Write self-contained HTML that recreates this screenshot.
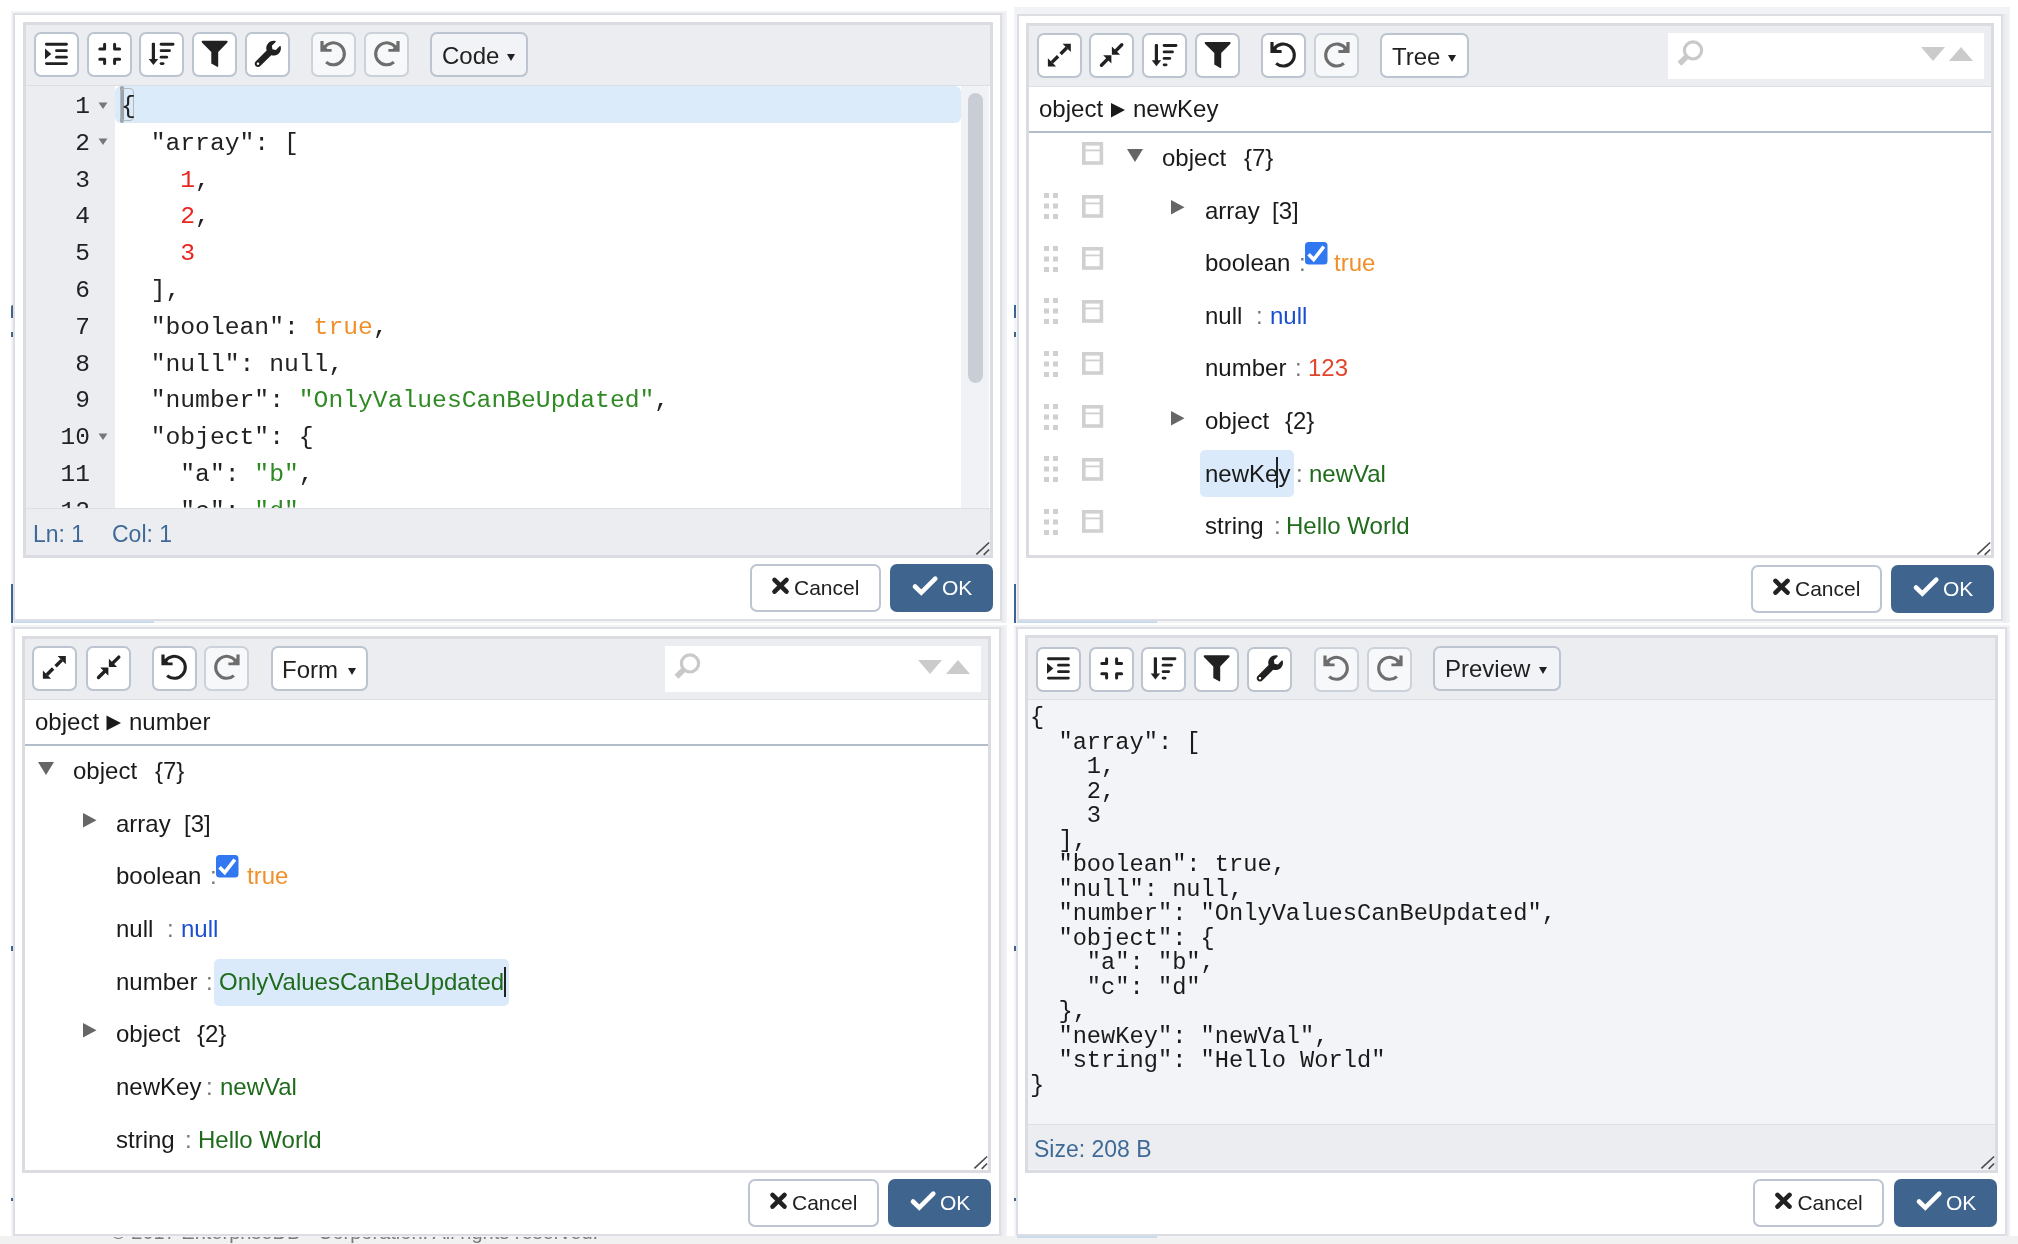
<!DOCTYPE html><html><head><meta charset="utf-8"><title>JSON editors</title><style>html,body{margin:0;padding:0;}body{will-change:transform;width:2018px;height:1244px;position:relative;overflow:hidden;background:#fff;font-family:"Liberation Sans",sans-serif;}</style></head><body>
<div style="position:absolute;left:0px;top:1236px;width:2018px;height:8px;background:#f1f1f2"></div>
<div style="position:absolute;left:111px;top:1217px;font-family:'Liberation Sans', sans-serif;font-size:20px;line-height:30px;color:#7b7b7b;white-space:pre;">© 2017 EnterpriseDB</div>
<div style="position:absolute;left:318px;top:1217px;font-family:'Liberation Sans', sans-serif;font-size:20px;line-height:30px;color:#7b7b7b;white-space:pre;">Corporation. All rights reserved.</div>
<div style="position:absolute;left:11px;top:11px;width:996px;height:612px;background:#f2f3f6"></div>
<div style="position:absolute;left:1002px;top:13px;width:5px;height:610px;background:linear-gradient(to right,#e7e9ed,#f3f4f6)"></div>
<div style="position:absolute;left:13px;top:13px;width:989px;height:608px;box-sizing:border-box;background:#fff;border:2px solid #dcdee3"></div>
<div style="position:absolute;left:11px;top:584px;width:2px;height:39px;background:#3d6590"></div>
<div style="position:absolute;left:14px;top:621px;width:140px;height:2px;background:#c9dcec"></div>
<div style="position:absolute;left:11px;top:305px;width:2px;height:13px;background:#3d6590;border-top-left-radius:2px"></div>
<div style="position:absolute;left:11px;top:332px;width:2px;height:5px;background:#3d6590"></div>
<div style="position:absolute;left:23px;top:22px;width:970px;height:536px;box-sizing:border-box;background:#fff;border:3px solid #dadce2"></div>
<div style="position:absolute;left:26px;top:25px;width:964px;height:61px;background:#ebedf1;border-bottom:1px solid #dcdee3;box-sizing:border-box"></div>
<div style="position:absolute;left:34px;top:32px;width:45px;height:45px;box-sizing:border-box;background:#ffffff;border:2px solid #bcc4d0;border-radius:7px"></div>
<svg style="position:absolute;left:34px;top:32px" width="45" height="45" viewBox="0 0 45 45"><g transform="translate(0,0.5)"><g fill="#212121"><rect x="11" y="10.3" width="22.8" height="2.9" rx="1.4"/><rect x="21.1" y="16.8" width="12.7" height="2.8" rx="1.4"/><rect x="21.1" y="23.3" width="12.7" height="2.8" rx="1.4"/><rect x="11" y="29.7" width="22.8" height="2.8" rx="1.4"/><polygon points="11,16.1 17.3,21.4 11,26.7"/></g></g></svg>
<div style="position:absolute;left:86.7px;top:32px;width:45px;height:45px;box-sizing:border-box;background:#ffffff;border:2px solid #bcc4d0;border-radius:7px"></div>
<svg style="position:absolute;left:86.7px;top:32px" width="45" height="45" viewBox="0 0 45 45"><g transform="translate(0,0.5)"><g fill="none" stroke="#212121" stroke-width="3" stroke-linecap="round" stroke-linejoin="round"><polyline points="12.8,16.6 17.6,16.6 17.6,11.8"/><polyline points="32.6,16.6 27.6,16.6 27.6,11.8"/><polyline points="12.8,26.7 17.6,26.7 17.6,31"/><polyline points="32.6,26.7 27.6,26.7 27.6,31"/></g></g></svg>
<div style="position:absolute;left:139.3px;top:32px;width:45px;height:45px;box-sizing:border-box;background:#ffffff;border:2px solid #bcc4d0;border-radius:7px"></div>
<svg style="position:absolute;left:139.3px;top:32px" width="45" height="45" viewBox="0 0 45 45"><g transform="translate(0,0.5)"><g fill="#212121"><rect x="12.8" y="10.3" width="3.2" height="17.5" rx="1"/><polygon points="9.7,26.6 19.2,26.6 14.4,32.6"/><rect x="20.7" y="10.3" width="14.7" height="2.9" rx="1.4"/><rect x="20.7" y="16.8" width="11.2" height="2.8" rx="1.4"/><rect x="20.7" y="23.3" width="8.4" height="2.8" rx="1.4"/><rect x="20.7" y="29.7" width="4.8" height="2.8" rx="1.4"/></g></g></svg>
<div style="position:absolute;left:191.9px;top:32px;width:45px;height:45px;box-sizing:border-box;background:#ffffff;border:2px solid #bcc4d0;border-radius:7px"></div>
<svg style="position:absolute;left:191.9px;top:32px" width="45" height="45" viewBox="0 0 45 45"><g transform="translate(0,0.5)"><path fill="#212121" d="M10.6,8.3 L34.7,8.3 Q36.3,8.5 35.4,10 L26.2,19.4 L26.2,33.6 Q26.2,34.8 25.2,34.2 L19.3,30.9 L19.3,19.4 L9.9,10 Q9.1,8.5 10.6,8.3 Z"/></g></svg>
<div style="position:absolute;left:244.5px;top:32px;width:45px;height:45px;box-sizing:border-box;background:#ffffff;border:2px solid #bcc4d0;border-radius:7px"></div>
<svg style="position:absolute;left:244.5px;top:32px" width="45" height="45" viewBox="0 0 45 45"><g transform="translate(0,0.5)"><g transform="translate(9.7,8.3) scale(0.0513)"><path fill="#212121" d="M507.73 109.1c-2.24-9.03-13.54-12.09-20.12-5.51l-74.36 74.36-67.88-11.31-11.31-67.88 74.36-74.36c6.62-6.62 3.43-17.9-5.66-20.16-47.38-11.74-99.55.91-136.58 37.93-39.64 39.64-50.55 97.1-34.05 147.2L18.74 402.76c-24.99 24.99-24.99 65.51 0 90.5 24.99 24.99 65.51 24.99 90.5 0l213.21-213.21c50.12 16.71 107.47 5.68 147.37-34.22 37.07-37.07 49.7-89.32 37.91-136.73zM64 472c-13.25 0-24-10.75-24-24 0-13.26 10.75-24 24-24s24 10.74 24 24c0 13.25-10.75 24-24 24z"/></g></g></svg>
<div style="position:absolute;left:311px;top:32px;width:45px;height:45px;box-sizing:border-box;background:#f7f8fa;border:2px solid #ccd2da;border-radius:7px"></div>
<svg style="position:absolute;left:311px;top:32px" width="45" height="45" viewBox="0 0 45 45"><g transform="translate(0,0.5)"><g><path d="M13.3,15 A11,11 0 1 1 15.1,29.6" fill="none" stroke="#6d6d6d" stroke-width="3.1"/><polygon fill="#6d6d6d" points="9.4,8.4 12.6,8.4 12.6,12.8 16.4,16.4 20.6,16.4 20.6,19.2 9.4,19.2"/></g></g></svg>
<div style="position:absolute;left:364px;top:32px;width:45px;height:45px;box-sizing:border-box;background:#f7f8fa;border:2px solid #ccd2da;border-radius:7px"></div>
<svg style="position:absolute;left:364px;top:32px" width="45" height="45" viewBox="0 0 45 45"><g transform="translate(0,0.5)"><g transform="translate(45,0) scale(-1,1)"><g><path d="M13.3,15 A11,11 0 1 1 15.1,29.6" fill="none" stroke="#6d6d6d" stroke-width="3.1"/><polygon fill="#6d6d6d" points="9.4,8.4 12.6,8.4 12.6,12.8 16.4,16.4 20.6,16.4 20.6,19.2 9.4,19.2"/></g></g></g></svg>
<div style="position:absolute;left:430px;top:32px;width:98px;height:45px;box-sizing:border-box;background:#f2f3f6;border:2px solid #bcc4d0;border-radius:7px"></div>
<div style="position:absolute;left:442px;top:41px;font-family:'Liberation Sans', sans-serif;font-size:24px;line-height:30px;color:#212121;white-space:pre;">Code</div>
<svg style="position:absolute;left:507px;top:54px" width="8" height="8" viewBox="0 0 8 8"><polygon points="0,0 8,0 4,7" fill="#212121"/></svg>
<div style="position:absolute;left:26px;top:86px;width:89px;height:422px;background:#ebedf1"></div>
<div style="position:absolute;left:961px;top:86px;width:28px;height:422px;background:#f1f2f5"></div>
<div style="position:absolute;left:968px;top:93px;width:15px;height:290px;background:#c9ced6;border-radius:7.5px"></div>
<div style="position:absolute;left:115px;top:86px;width:846px;height:37px;background:#dbebf9;border-radius:6px"></div>
<div style="position:absolute;left:120px;top:86px;width:4px;height:37px;background:#9aa3ad;border-radius:2px"></div>
<div style="position:absolute;left:120px;top:88px;width:14px;height:33px;box-sizing:border-box;border:1px solid #b8b8b8;border-radius:4px"></div>
<div style="position:absolute;left:26px;top:86px;width:935px;height:422px;overflow:hidden">
<div style="position:absolute;left:0px;top:2.0px;width:64px;text-align:right;font-family:'Liberation Mono', monospace;font-size:24.5px;line-height:37px;color:#222">1</div>
<svg style="position:absolute;left:72px;top:15.5px" width="10" height="8"><polygon points="0.5,0.5 9.5,0.5 5,7" fill="#777"/></svg>
<div style="position:absolute;left:95px;top:2.0px;font-family:'Liberation Mono', monospace;font-size:24.7px;line-height:37px;color:#222;white-space:pre">{</div>
<div style="position:absolute;left:0px;top:38.8px;width:64px;text-align:right;font-family:'Liberation Mono', monospace;font-size:24.5px;line-height:37px;color:#222">2</div>
<svg style="position:absolute;left:72px;top:52.3px" width="10" height="8"><polygon points="0.5,0.5 9.5,0.5 5,7" fill="#777"/></svg>
<div style="position:absolute;left:95px;top:38.8px;font-family:'Liberation Mono', monospace;font-size:24.7px;line-height:37px;color:#222;white-space:pre">  "array": [</div>
<div style="position:absolute;left:0px;top:75.6px;width:64px;text-align:right;font-family:'Liberation Mono', monospace;font-size:24.5px;line-height:37px;color:#222">3</div>
<div style="position:absolute;left:95px;top:75.6px;font-family:'Liberation Mono', monospace;font-size:24.7px;line-height:37px;color:#222;white-space:pre">    <span style="color:#e8261e">1</span>,</div>
<div style="position:absolute;left:0px;top:112.4px;width:64px;text-align:right;font-family:'Liberation Mono', monospace;font-size:24.5px;line-height:37px;color:#222">4</div>
<div style="position:absolute;left:95px;top:112.4px;font-family:'Liberation Mono', monospace;font-size:24.7px;line-height:37px;color:#222;white-space:pre">    <span style="color:#e8261e">2</span>,</div>
<div style="position:absolute;left:0px;top:149.2px;width:64px;text-align:right;font-family:'Liberation Mono', monospace;font-size:24.5px;line-height:37px;color:#222">5</div>
<div style="position:absolute;left:95px;top:149.2px;font-family:'Liberation Mono', monospace;font-size:24.7px;line-height:37px;color:#222;white-space:pre">    <span style="color:#e8261e">3</span></div>
<div style="position:absolute;left:0px;top:186.0px;width:64px;text-align:right;font-family:'Liberation Mono', monospace;font-size:24.5px;line-height:37px;color:#222">6</div>
<div style="position:absolute;left:95px;top:186.0px;font-family:'Liberation Mono', monospace;font-size:24.7px;line-height:37px;color:#222;white-space:pre">  ],</div>
<div style="position:absolute;left:0px;top:222.8px;width:64px;text-align:right;font-family:'Liberation Mono', monospace;font-size:24.5px;line-height:37px;color:#222">7</div>
<div style="position:absolute;left:95px;top:222.8px;font-family:'Liberation Mono', monospace;font-size:24.7px;line-height:37px;color:#222;white-space:pre">  "boolean": <span style="color:#f0902a">true</span>,</div>
<div style="position:absolute;left:0px;top:259.6px;width:64px;text-align:right;font-family:'Liberation Mono', monospace;font-size:24.5px;line-height:37px;color:#222">8</div>
<div style="position:absolute;left:95px;top:259.6px;font-family:'Liberation Mono', monospace;font-size:24.7px;line-height:37px;color:#222;white-space:pre">  "null": null,</div>
<div style="position:absolute;left:0px;top:296.4px;width:64px;text-align:right;font-family:'Liberation Mono', monospace;font-size:24.5px;line-height:37px;color:#222">9</div>
<div style="position:absolute;left:95px;top:296.4px;font-family:'Liberation Mono', monospace;font-size:24.7px;line-height:37px;color:#222;white-space:pre">  "number": <span style="color:#2f8a24">"OnlyValuesCanBeUpdated"</span>,</div>
<div style="position:absolute;left:0px;top:333.2px;width:64px;text-align:right;font-family:'Liberation Mono', monospace;font-size:24.5px;line-height:37px;color:#222">10</div>
<svg style="position:absolute;left:72px;top:346.7px" width="10" height="8"><polygon points="0.5,0.5 9.5,0.5 5,7" fill="#777"/></svg>
<div style="position:absolute;left:95px;top:333.2px;font-family:'Liberation Mono', monospace;font-size:24.7px;line-height:37px;color:#222;white-space:pre">  "object": {</div>
<div style="position:absolute;left:0px;top:370.0px;width:64px;text-align:right;font-family:'Liberation Mono', monospace;font-size:24.5px;line-height:37px;color:#222">11</div>
<div style="position:absolute;left:95px;top:370.0px;font-family:'Liberation Mono', monospace;font-size:24.7px;line-height:37px;color:#222;white-space:pre">    "a": <span style="color:#2f8a24">"b"</span>,</div>
<div style="position:absolute;left:0px;top:406.8px;width:64px;text-align:right;font-family:'Liberation Mono', monospace;font-size:24.5px;line-height:37px;color:#222">12</div>
<div style="position:absolute;left:95px;top:406.8px;font-family:'Liberation Mono', monospace;font-size:24.7px;line-height:37px;color:#222;white-space:pre">    "c": <span style="color:#2f8a24">"d"</span></div>
</div>
<div style="position:absolute;left:26px;top:508px;width:964px;height:47px;background:#ebedf1;border-top:1px solid #dcdee3;box-sizing:border-box"></div>
<div style="position:absolute;left:33px;top:519px;font-family:'Liberation Sans', sans-serif;font-size:23px;line-height:30px;color:#3f6a97;white-space:pre;">Ln: 1</div>
<div style="position:absolute;left:112px;top:519px;font-family:'Liberation Sans', sans-serif;font-size:23px;line-height:30px;color:#3f6a97;white-space:pre;">Col: 1</div>
<svg style="position:absolute;left:974px;top:540px" width="16" height="16" viewBox="0 0 16 16"><g stroke="#4a4a4a" stroke-width="1.6"><line x1="2.4" y1="14.4" x2="15.1" y2="2.5"/><line x1="9.7" y1="14.9" x2="15.1" y2="9.5"/></g></svg>
<div style="position:absolute;left:750px;top:564px;width:131px;height:48px;box-sizing:border-box;background:#fff;border:2px solid #bcc5d1;border-radius:7px"></div>
<svg style="position:absolute;left:750px;top:564px" width="60" height="48" viewBox="0 0 60 48"><g stroke="#212121" stroke-width="4.6" stroke-linecap="round"><line x1="24.5" y1="15.9" x2="36.5" y2="27.6"/><line x1="36.5" y1="15.9" x2="24.5" y2="27.6"/></g></svg>
<div style="position:absolute;left:794px;top:573px;font-family:'Liberation Sans', sans-serif;font-size:21px;line-height:30px;color:#212121;white-space:pre;">Cancel</div>
<div style="position:absolute;left:890px;top:564px;width:103px;height:48px;background:#3f658f;border-radius:7px"></div>
<svg style="position:absolute;left:890px;top:564px" width="60" height="48" viewBox="0 0 60 48"><polyline points="25,22.5 31.3,28.6 45.3,14.6" fill="none" stroke="#fff" stroke-width="4.6" stroke-linecap="round" stroke-linejoin="miter"/></svg>
<div style="position:absolute;left:942px;top:573px;font-family:'Liberation Sans', sans-serif;font-size:21px;line-height:30px;color:#ffffff;white-space:pre;">OK</div>
<div style="position:absolute;left:1014px;top:7px;width:996px;height:616px;background:#f2f3f6"></div>
<div style="position:absolute;left:2002.5px;top:14px;width:7.5px;height:609px;background:linear-gradient(to right,#e7e9ed,#f3f4f6)"></div>
<div style="position:absolute;left:1016.5px;top:14px;width:986.0px;height:607px;box-sizing:border-box;background:#fff;border:2px solid #dcdee3"></div>
<div style="position:absolute;left:1014px;top:584px;width:2px;height:39px;background:#3d6590"></div>
<div style="position:absolute;left:1017px;top:621px;width:140px;height:2px;background:#c9dcec"></div>
<div style="position:absolute;left:1014px;top:305px;width:2px;height:13px;background:#3d6590"></div>
<div style="position:absolute;left:1014px;top:332px;width:2px;height:5px;background:#3d6590"></div>
<div style="position:absolute;left:1026px;top:23px;width:968px;height:535px;box-sizing:border-box;background:#fff;border:3px solid #dadce2"></div>
<div style="position:absolute;left:1029px;top:26px;width:962px;height:61px;background:#ebedf1;border-bottom:1px solid #dcdee3;box-sizing:border-box"></div>
<div style="position:absolute;left:1037.1px;top:33px;width:45px;height:45px;box-sizing:border-box;background:#ffffff;border:2px solid #bcc4d0;border-radius:7px"></div>
<svg style="position:absolute;left:1037.1px;top:33px" width="45" height="45" viewBox="0 0 45 45"><g transform="translate(0,0.7)"><g fill="#212121"><polygon points="33.8,10.1 25.6,10.1 33.8,18.3"/><polygon points="10.9,32.7 19.1,32.7 10.9,24.5"/></g><g stroke="#212121" stroke-width="3.4" stroke-linecap="butt"><line x1="29.8" y1="14.1" x2="23.6" y2="20.3"/><line x1="14.9" y1="28.7" x2="21.1" y2="22.5"/></g></g></svg>
<div style="position:absolute;left:1089.4px;top:33px;width:45px;height:45px;box-sizing:border-box;background:#ffffff;border:2px solid #bcc4d0;border-radius:7px"></div>
<svg style="position:absolute;left:1089.4px;top:33px" width="45" height="45" viewBox="0 0 45 45"><g transform="translate(0,0.7)"><g fill="#212121"><polygon points="22.9,21 22.9,12.8 31.1,21"/><polygon points="22.4,21.6 22.4,29.8 14.2,21.6"/></g><g stroke="#212121" stroke-width="3.4" stroke-linecap="round"><line x1="26.5" y1="17.4" x2="32.8" y2="11.1"/><line x1="18.8" y1="25.2" x2="12.5" y2="31.5"/></g></g></svg>
<div style="position:absolute;left:1142px;top:33px;width:45px;height:45px;box-sizing:border-box;background:#ffffff;border:2px solid #bcc4d0;border-radius:7px"></div>
<svg style="position:absolute;left:1142px;top:33px" width="45" height="45" viewBox="0 0 45 45"><g transform="translate(0,0.7)"><g fill="#212121"><rect x="12.8" y="10.3" width="3.2" height="17.5" rx="1"/><polygon points="9.7,26.6 19.2,26.6 14.4,32.6"/><rect x="20.7" y="10.3" width="14.7" height="2.9" rx="1.4"/><rect x="20.7" y="16.8" width="11.2" height="2.8" rx="1.4"/><rect x="20.7" y="23.3" width="8.4" height="2.8" rx="1.4"/><rect x="20.7" y="29.7" width="4.8" height="2.8" rx="1.4"/></g></g></svg>
<div style="position:absolute;left:1194.6px;top:33px;width:45px;height:45px;box-sizing:border-box;background:#ffffff;border:2px solid #bcc4d0;border-radius:7px"></div>
<svg style="position:absolute;left:1194.6px;top:33px" width="45" height="45" viewBox="0 0 45 45"><g transform="translate(0,0.7)"><path fill="#212121" d="M10.6,8.3 L34.7,8.3 Q36.3,8.5 35.4,10 L26.2,19.4 L26.2,33.6 Q26.2,34.8 25.2,34.2 L19.3,30.9 L19.3,19.4 L9.9,10 Q9.1,8.5 10.6,8.3 Z"/></g></svg>
<div style="position:absolute;left:1261.2px;top:33px;width:45px;height:45px;box-sizing:border-box;background:#ffffff;border:2px solid #bcc4d0;border-radius:7px"></div>
<svg style="position:absolute;left:1261.2px;top:33px" width="45" height="45" viewBox="0 0 45 45"><g transform="translate(0,0.7)"><g><path d="M13.3,15 A11,11 0 1 1 15.1,29.6" fill="none" stroke="#212121" stroke-width="3.1"/><polygon fill="#212121" points="9.4,8.4 12.6,8.4 12.6,12.8 16.4,16.4 20.6,16.4 20.6,19.2 9.4,19.2"/></g></g></svg>
<div style="position:absolute;left:1313.8px;top:33px;width:45px;height:45px;box-sizing:border-box;background:#f7f8fa;border:2px solid #ccd2da;border-radius:7px"></div>
<svg style="position:absolute;left:1313.8px;top:33px" width="45" height="45" viewBox="0 0 45 45"><g transform="translate(0,0.7)"><g transform="translate(45,0) scale(-1,1)"><g><path d="M13.3,15 A11,11 0 1 1 15.1,29.6" fill="none" stroke="#6d6d6d" stroke-width="3.1"/><polygon fill="#6d6d6d" points="9.4,8.4 12.6,8.4 12.6,12.8 16.4,16.4 20.6,16.4 20.6,19.2 9.4,19.2"/></g></g></g></svg>
<div style="position:absolute;left:1380px;top:33px;width:89px;height:45px;box-sizing:border-box;background:#ffffff;border:2px solid #bcc4d0;border-radius:7px"></div>
<div style="position:absolute;left:1392px;top:42px;font-family:'Liberation Sans', sans-serif;font-size:24px;line-height:30px;color:#212121;white-space:pre;">Tree</div>
<svg style="position:absolute;left:1448px;top:55px" width="8" height="8" viewBox="0 0 8 8"><polygon points="0,0 8,0 4,7" fill="#212121"/></svg>
<div style="position:absolute;left:1668px;top:33px;width:316px;height:46px;background:#fff"></div>
<svg style="position:absolute;left:1668px;top:33px" width="316" height="46" viewBox="0 0 316 46"><g fill="none" stroke="#c9c9c9"><circle cx="25" cy="17.4" r="8.6" stroke-width="3.2"/><line x1="18.5" y1="23.8" x2="11.5" y2="30.8" stroke-width="5.5"/></g><polygon fill="#cbcbcb" points="253,14 277,14 265,28"/><polygon fill="#cbcbcb" points="281,28 305,28 293,14"/></svg>
<div style="position:absolute;left:1029px;top:87px;width:962px;height:46px;background:#fff;border-bottom:2px solid #b3bcc9;box-sizing:border-box"></div>
<div style="position:absolute;left:1039px;top:94px;font-family:'Liberation Sans', sans-serif;font-size:24px;line-height:30px;color:#1a1a1a;white-space:pre;">object</div>
<svg style="position:absolute;left:1110px;top:102px" width="16" height="17" viewBox="0 0 16 17"><polygon points="1,1 15,8 1,15.5" fill="#1a1a1a"/></svg>
<div style="position:absolute;left:1133px;top:94px;font-family:'Liberation Sans', sans-serif;font-size:24px;line-height:30px;color:#1a1a1a;white-space:pre;">newKey</div>
<svg style="position:absolute;left:1082px;top:142px" width="22" height="23" viewBox="0 0 22 23"><rect x="1.8" y="1.8" width="17.6" height="19.2" fill="none" stroke="#d0d0d0" stroke-width="3.6"/><rect x="3" y="7.5" width="16" height="1.8" fill="#d0d0d0"/></svg>
<svg style="position:absolute;left:1127px;top:148.5px" width="16" height="14" viewBox="0 0 16 14"><polygon points="0,0 16,0 8,13" fill="#666"/></svg>
<div style="position:absolute;left:1162px;top:143px;font-family:'Liberation Sans', sans-serif;font-size:24px;line-height:30px;color:#1a1a1a;white-space:pre;">object</div>
<div style="position:absolute;left:1244px;top:143px;font-family:'Liberation Sans', sans-serif;font-size:24px;line-height:30px;color:#1a1a1a;white-space:pre;">{7}</div>
<svg style="position:absolute;left:1044px;top:193.1px" width="15" height="27" viewBox="0 0 15 27"><rect x="0" y="0.0" width="5" height="5" fill="#d0d0d0"/><rect x="9" y="0.0" width="5" height="5" fill="#d0d0d0"/><rect x="0" y="10.5" width="5" height="5" fill="#d0d0d0"/><rect x="9" y="10.5" width="5" height="5" fill="#d0d0d0"/><rect x="0" y="21.0" width="5" height="5" fill="#d0d0d0"/><rect x="9" y="21.0" width="5" height="5" fill="#d0d0d0"/></svg>
<svg style="position:absolute;left:1082px;top:194.6px" width="22" height="23" viewBox="0 0 22 23"><rect x="1.8" y="1.8" width="17.6" height="19.2" fill="none" stroke="#d0d0d0" stroke-width="3.6"/><rect x="3" y="7.5" width="16" height="1.8" fill="#d0d0d0"/></svg>
<svg style="position:absolute;left:1044px;top:245.7px" width="15" height="27" viewBox="0 0 15 27"><rect x="0" y="0.0" width="5" height="5" fill="#d0d0d0"/><rect x="9" y="0.0" width="5" height="5" fill="#d0d0d0"/><rect x="0" y="10.5" width="5" height="5" fill="#d0d0d0"/><rect x="9" y="10.5" width="5" height="5" fill="#d0d0d0"/><rect x="0" y="21.0" width="5" height="5" fill="#d0d0d0"/><rect x="9" y="21.0" width="5" height="5" fill="#d0d0d0"/></svg>
<svg style="position:absolute;left:1082px;top:247.2px" width="22" height="23" viewBox="0 0 22 23"><rect x="1.8" y="1.8" width="17.6" height="19.2" fill="none" stroke="#d0d0d0" stroke-width="3.6"/><rect x="3" y="7.5" width="16" height="1.8" fill="#d0d0d0"/></svg>
<svg style="position:absolute;left:1044px;top:298.3px" width="15" height="27" viewBox="0 0 15 27"><rect x="0" y="0.0" width="5" height="5" fill="#d0d0d0"/><rect x="9" y="0.0" width="5" height="5" fill="#d0d0d0"/><rect x="0" y="10.5" width="5" height="5" fill="#d0d0d0"/><rect x="9" y="10.5" width="5" height="5" fill="#d0d0d0"/><rect x="0" y="21.0" width="5" height="5" fill="#d0d0d0"/><rect x="9" y="21.0" width="5" height="5" fill="#d0d0d0"/></svg>
<svg style="position:absolute;left:1082px;top:299.8px" width="22" height="23" viewBox="0 0 22 23"><rect x="1.8" y="1.8" width="17.6" height="19.2" fill="none" stroke="#d0d0d0" stroke-width="3.6"/><rect x="3" y="7.5" width="16" height="1.8" fill="#d0d0d0"/></svg>
<svg style="position:absolute;left:1044px;top:350.9px" width="15" height="27" viewBox="0 0 15 27"><rect x="0" y="0.0" width="5" height="5" fill="#d0d0d0"/><rect x="9" y="0.0" width="5" height="5" fill="#d0d0d0"/><rect x="0" y="10.5" width="5" height="5" fill="#d0d0d0"/><rect x="9" y="10.5" width="5" height="5" fill="#d0d0d0"/><rect x="0" y="21.0" width="5" height="5" fill="#d0d0d0"/><rect x="9" y="21.0" width="5" height="5" fill="#d0d0d0"/></svg>
<svg style="position:absolute;left:1082px;top:352.4px" width="22" height="23" viewBox="0 0 22 23"><rect x="1.8" y="1.8" width="17.6" height="19.2" fill="none" stroke="#d0d0d0" stroke-width="3.6"/><rect x="3" y="7.5" width="16" height="1.8" fill="#d0d0d0"/></svg>
<svg style="position:absolute;left:1044px;top:403.5px" width="15" height="27" viewBox="0 0 15 27"><rect x="0" y="0.0" width="5" height="5" fill="#d0d0d0"/><rect x="9" y="0.0" width="5" height="5" fill="#d0d0d0"/><rect x="0" y="10.5" width="5" height="5" fill="#d0d0d0"/><rect x="9" y="10.5" width="5" height="5" fill="#d0d0d0"/><rect x="0" y="21.0" width="5" height="5" fill="#d0d0d0"/><rect x="9" y="21.0" width="5" height="5" fill="#d0d0d0"/></svg>
<svg style="position:absolute;left:1082px;top:405px" width="22" height="23" viewBox="0 0 22 23"><rect x="1.8" y="1.8" width="17.6" height="19.2" fill="none" stroke="#d0d0d0" stroke-width="3.6"/><rect x="3" y="7.5" width="16" height="1.8" fill="#d0d0d0"/></svg>
<svg style="position:absolute;left:1044px;top:456.1px" width="15" height="27" viewBox="0 0 15 27"><rect x="0" y="0.0" width="5" height="5" fill="#d0d0d0"/><rect x="9" y="0.0" width="5" height="5" fill="#d0d0d0"/><rect x="0" y="10.5" width="5" height="5" fill="#d0d0d0"/><rect x="9" y="10.5" width="5" height="5" fill="#d0d0d0"/><rect x="0" y="21.0" width="5" height="5" fill="#d0d0d0"/><rect x="9" y="21.0" width="5" height="5" fill="#d0d0d0"/></svg>
<svg style="position:absolute;left:1082px;top:457.6px" width="22" height="23" viewBox="0 0 22 23"><rect x="1.8" y="1.8" width="17.6" height="19.2" fill="none" stroke="#d0d0d0" stroke-width="3.6"/><rect x="3" y="7.5" width="16" height="1.8" fill="#d0d0d0"/></svg>
<svg style="position:absolute;left:1044px;top:508.70000000000005px" width="15" height="27" viewBox="0 0 15 27"><rect x="0" y="0.0" width="5" height="5" fill="#d0d0d0"/><rect x="9" y="0.0" width="5" height="5" fill="#d0d0d0"/><rect x="0" y="10.5" width="5" height="5" fill="#d0d0d0"/><rect x="9" y="10.5" width="5" height="5" fill="#d0d0d0"/><rect x="0" y="21.0" width="5" height="5" fill="#d0d0d0"/><rect x="9" y="21.0" width="5" height="5" fill="#d0d0d0"/></svg>
<svg style="position:absolute;left:1082px;top:510.20000000000005px" width="22" height="23" viewBox="0 0 22 23"><rect x="1.8" y="1.8" width="17.6" height="19.2" fill="none" stroke="#d0d0d0" stroke-width="3.6"/><rect x="3" y="7.5" width="16" height="1.8" fill="#d0d0d0"/></svg>
<svg style="position:absolute;left:1171.3px;top:200px" width="14" height="16" viewBox="0 0 14 16"><polygon points="0,0 13.5,7.3 0,14.6" fill="#666"/></svg>
<div style="position:absolute;left:1205px;top:195.6px;font-family:'Liberation Sans', sans-serif;font-size:24px;line-height:30px;color:#1a1a1a;white-space:pre;">array</div>
<div style="position:absolute;left:1272px;top:195.6px;font-family:'Liberation Sans', sans-serif;font-size:24px;line-height:30px;color:#1a1a1a;white-space:pre;">[3]</div>
<div style="position:absolute;left:1205px;top:248.2px;font-family:'Liberation Sans', sans-serif;font-size:24px;line-height:30px;color:#1a1a1a;white-space:pre;">boolean</div>
<div style="position:absolute;left:1299px;top:248.2px;font-family:'Liberation Sans', sans-serif;font-size:24px;line-height:30px;color:#777;white-space:pre;">:</div>
<svg style="position:absolute;left:1305px;top:242px" width="23" height="23" viewBox="0 0 23 23"><rect x="0" y="0" width="22.5" height="22.5" rx="3.5" fill="#3178f0"/><polyline points="3.6,12.3 8.7,17.6 18.8,4.6" fill="none" stroke="#fff" stroke-width="3.6"/></svg>
<div style="position:absolute;left:1334px;top:248.2px;font-family:'Liberation Sans', sans-serif;font-size:24px;line-height:30px;color:#f0902a;white-space:pre;">true</div>
<div style="position:absolute;left:1205px;top:300.8px;font-family:'Liberation Sans', sans-serif;font-size:24px;line-height:30px;color:#1a1a1a;white-space:pre;">null</div>
<div style="position:absolute;left:1256px;top:300.8px;font-family:'Liberation Sans', sans-serif;font-size:24px;line-height:30px;color:#777;white-space:pre;">:</div>
<div style="position:absolute;left:1270px;top:300.8px;font-family:'Liberation Sans', sans-serif;font-size:24px;line-height:30px;color:#1a4fd0;white-space:pre;">null</div>
<div style="position:absolute;left:1205px;top:353.4px;font-family:'Liberation Sans', sans-serif;font-size:24px;line-height:30px;color:#1a1a1a;white-space:pre;">number</div>
<div style="position:absolute;left:1295px;top:353.4px;font-family:'Liberation Sans', sans-serif;font-size:24px;line-height:30px;color:#777;white-space:pre;">:</div>
<div style="position:absolute;left:1308px;top:353.4px;font-family:'Liberation Sans', sans-serif;font-size:24px;line-height:30px;color:#e2452c;white-space:pre;">123</div>
<svg style="position:absolute;left:1171.3px;top:410.5px" width="14" height="16" viewBox="0 0 14 16"><polygon points="0,0 13.5,7.3 0,14.6" fill="#666"/></svg>
<div style="position:absolute;left:1205px;top:406px;font-family:'Liberation Sans', sans-serif;font-size:24px;line-height:30px;color:#1a1a1a;white-space:pre;">object</div>
<div style="position:absolute;left:1285px;top:406px;font-family:'Liberation Sans', sans-serif;font-size:24px;line-height:30px;color:#1a1a1a;white-space:pre;">{2}</div>
<div style="position:absolute;left:1199.6px;top:450px;width:94.4px;height:47px;background:#dbeafa;border-radius:5px"></div>
<div style="position:absolute;left:1205px;top:458.6px;font-family:'Liberation Sans', sans-serif;font-size:24px;line-height:30px;color:#1a1a1a;white-space:pre;">newKey</div>
<div style="position:absolute;left:1276px;top:457px;width:1.5px;height:31px;background:#222"></div>
<div style="position:absolute;left:1296px;top:458.6px;font-family:'Liberation Sans', sans-serif;font-size:24px;line-height:30px;color:#777;white-space:pre;">:</div>
<div style="position:absolute;left:1309px;top:458.6px;font-family:'Liberation Sans', sans-serif;font-size:24px;line-height:30px;color:#1f6b1c;white-space:pre;">newVal</div>
<div style="position:absolute;left:1205px;top:511.20000000000005px;font-family:'Liberation Sans', sans-serif;font-size:24px;line-height:30px;color:#1a1a1a;white-space:pre;">string</div>
<div style="position:absolute;left:1274px;top:511.20000000000005px;font-family:'Liberation Sans', sans-serif;font-size:24px;line-height:30px;color:#777;white-space:pre;">:</div>
<div style="position:absolute;left:1286px;top:511.20000000000005px;font-family:'Liberation Sans', sans-serif;font-size:24px;line-height:30px;color:#1f6b1c;white-space:pre;">Hello World</div>
<svg style="position:absolute;left:1975px;top:540px" width="16" height="16" viewBox="0 0 16 16"><g stroke="#4a4a4a" stroke-width="1.6"><line x1="2.4" y1="14.4" x2="15.1" y2="2.5"/><line x1="9.7" y1="14.9" x2="15.1" y2="9.5"/></g></svg>
<div style="position:absolute;left:1751px;top:564.5px;width:131px;height:48px;box-sizing:border-box;background:#fff;border:2px solid #bcc5d1;border-radius:7px"></div>
<svg style="position:absolute;left:1751px;top:564.5px" width="60" height="48" viewBox="0 0 60 48"><g stroke="#212121" stroke-width="4.6" stroke-linecap="round"><line x1="24.5" y1="15.9" x2="36.5" y2="27.6"/><line x1="36.5" y1="15.9" x2="24.5" y2="27.6"/></g></svg>
<div style="position:absolute;left:1795px;top:573.5px;font-family:'Liberation Sans', sans-serif;font-size:21px;line-height:30px;color:#212121;white-space:pre;">Cancel</div>
<div style="position:absolute;left:1891px;top:564.5px;width:103px;height:48px;background:#3f658f;border-radius:7px"></div>
<svg style="position:absolute;left:1891px;top:564.5px" width="60" height="48" viewBox="0 0 60 48"><polyline points="25,22.5 31.3,28.6 45.3,14.6" fill="none" stroke="#fff" stroke-width="4.6" stroke-linecap="round" stroke-linejoin="miter"/></svg>
<div style="position:absolute;left:1943px;top:573.5px;font-family:'Liberation Sans', sans-serif;font-size:21px;line-height:30px;color:#ffffff;white-space:pre;">OK</div>
<div style="position:absolute;left:11px;top:625px;width:996px;height:612px;background:#f2f3f6"></div>
<div style="position:absolute;left:1000.5px;top:627px;width:6.5px;height:610px;background:linear-gradient(to right,#e7e9ed,#f3f4f6)"></div>
<div style="position:absolute;left:13px;top:627px;width:987.5px;height:609px;box-sizing:border-box;background:#fff;border:2px solid #dcdee3"></div>
<div style="position:absolute;left:11px;top:946px;width:2px;height:5px;background:#3d6590"></div>
<div style="position:absolute;left:11px;top:1198px;width:2px;height:3px;background:#3d6590"></div>
<div style="position:absolute;left:22px;top:636px;width:969px;height:537px;box-sizing:border-box;background:#fff;border:3px solid #dadce2"></div>
<div style="position:absolute;left:25px;top:639px;width:963px;height:61px;background:#ebedf1;border-bottom:1px solid #dcdee3;box-sizing:border-box"></div>
<div style="position:absolute;left:32px;top:646px;width:45px;height:45px;box-sizing:border-box;background:#ffffff;border:2px solid #bcc4d0;border-radius:7px"></div>
<svg style="position:absolute;left:32px;top:646px" width="45" height="45" viewBox="0 0 45 45"><g transform="translate(0,0)"><g fill="#212121"><polygon points="33.8,10.1 25.6,10.1 33.8,18.3"/><polygon points="10.9,32.7 19.1,32.7 10.9,24.5"/></g><g stroke="#212121" stroke-width="3.4" stroke-linecap="butt"><line x1="29.8" y1="14.1" x2="23.6" y2="20.3"/><line x1="14.9" y1="28.7" x2="21.1" y2="22.5"/></g></g></svg>
<div style="position:absolute;left:85.5px;top:646px;width:45px;height:45px;box-sizing:border-box;background:#ffffff;border:2px solid #bcc4d0;border-radius:7px"></div>
<svg style="position:absolute;left:85.5px;top:646px" width="45" height="45" viewBox="0 0 45 45"><g transform="translate(0,0)"><g fill="#212121"><polygon points="22.9,21 22.9,12.8 31.1,21"/><polygon points="22.4,21.6 22.4,29.8 14.2,21.6"/></g><g stroke="#212121" stroke-width="3.4" stroke-linecap="round"><line x1="26.5" y1="17.4" x2="32.8" y2="11.1"/><line x1="18.8" y1="25.2" x2="12.5" y2="31.5"/></g></g></svg>
<div style="position:absolute;left:151.6px;top:646px;width:45px;height:45px;box-sizing:border-box;background:#ffffff;border:2px solid #bcc4d0;border-radius:7px"></div>
<svg style="position:absolute;left:151.6px;top:646px" width="45" height="45" viewBox="0 0 45 45"><g transform="translate(0,0)"><g><path d="M13.3,15 A11,11 0 1 1 15.1,29.6" fill="none" stroke="#212121" stroke-width="3.1"/><polygon fill="#212121" points="9.4,8.4 12.6,8.4 12.6,12.8 16.4,16.4 20.6,16.4 20.6,19.2 9.4,19.2"/></g></g></svg>
<div style="position:absolute;left:204.3px;top:646px;width:45px;height:45px;box-sizing:border-box;background:#f7f8fa;border:2px solid #ccd2da;border-radius:7px"></div>
<svg style="position:absolute;left:204.3px;top:646px" width="45" height="45" viewBox="0 0 45 45"><g transform="translate(0,0)"><g transform="translate(45,0) scale(-1,1)"><g><path d="M13.3,15 A11,11 0 1 1 15.1,29.6" fill="none" stroke="#6d6d6d" stroke-width="3.1"/><polygon fill="#6d6d6d" points="9.4,8.4 12.6,8.4 12.6,12.8 16.4,16.4 20.6,16.4 20.6,19.2 9.4,19.2"/></g></g></g></svg>
<div style="position:absolute;left:271px;top:646px;width:97px;height:45px;box-sizing:border-box;background:#ffffff;border:2px solid #bcc4d0;border-radius:7px"></div>
<div style="position:absolute;left:282px;top:655px;font-family:'Liberation Sans', sans-serif;font-size:24px;line-height:30px;color:#212121;white-space:pre;">Form</div>
<svg style="position:absolute;left:348px;top:668px" width="8" height="8" viewBox="0 0 8 8"><polygon points="0,0 8,0 4,7" fill="#212121"/></svg>
<div style="position:absolute;left:665px;top:646px;width:316px;height:46px;background:#fff"></div>
<svg style="position:absolute;left:665px;top:646px" width="316" height="46" viewBox="0 0 316 46"><g fill="none" stroke="#c9c9c9"><circle cx="25" cy="17.4" r="8.6" stroke-width="3.2"/><line x1="18.5" y1="23.8" x2="11.5" y2="30.8" stroke-width="5.5"/></g><polygon fill="#cbcbcb" points="253,14 277,14 265,28"/><polygon fill="#cbcbcb" points="281,28 305,28 293,14"/></svg>
<div style="position:absolute;left:25px;top:700px;width:963px;height:46px;background:#fff;border-bottom:2px solid #b3bcc9;box-sizing:border-box"></div>
<div style="position:absolute;left:35px;top:707px;font-family:'Liberation Sans', sans-serif;font-size:24px;line-height:30px;color:#1a1a1a;white-space:pre;">object</div>
<svg style="position:absolute;left:106px;top:715px" width="16" height="17" viewBox="0 0 16 17"><polygon points="0.5,0.5 15,8 0.5,15.5" fill="#1a1a1a"/></svg>
<div style="position:absolute;left:129px;top:707px;font-family:'Liberation Sans', sans-serif;font-size:24px;line-height:30px;color:#1a1a1a;white-space:pre;">number</div>
<svg style="position:absolute;left:37.7px;top:761.7px" width="16" height="14" viewBox="0 0 16 14"><polygon points="0,0 16,0 8,13" fill="#666"/></svg>
<div style="position:absolute;left:73px;top:755.6px;font-family:'Liberation Sans', sans-serif;font-size:24px;line-height:30px;color:#1a1a1a;white-space:pre;">object</div>
<div style="position:absolute;left:155px;top:755.6px;font-family:'Liberation Sans', sans-serif;font-size:24px;line-height:30px;color:#1a1a1a;white-space:pre;">{7}</div>
<svg style="position:absolute;left:83px;top:812.8px" width="14" height="16" viewBox="0 0 14 16"><polygon points="0,0 13.5,7.3 0,14.6" fill="#666"/></svg>
<div style="position:absolute;left:116px;top:808.5px;font-family:'Liberation Sans', sans-serif;font-size:24px;line-height:30px;color:#1a1a1a;white-space:pre;">array</div>
<div style="position:absolute;left:184px;top:808.5px;font-family:'Liberation Sans', sans-serif;font-size:24px;line-height:30px;color:#1a1a1a;white-space:pre;">[3]</div>
<div style="position:absolute;left:116px;top:861.4px;font-family:'Liberation Sans', sans-serif;font-size:24px;line-height:30px;color:#1a1a1a;white-space:pre;">boolean</div>
<div style="position:absolute;left:210px;top:861.4px;font-family:'Liberation Sans', sans-serif;font-size:24px;line-height:30px;color:#777;white-space:pre;">:</div>
<svg style="position:absolute;left:216px;top:855px" width="23" height="23" viewBox="0 0 23 23"><rect x="0" y="0" width="22.5" height="22.5" rx="3.5" fill="#3178f0"/><polyline points="3.6,12.3 8.7,17.6 18.8,4.6" fill="none" stroke="#fff" stroke-width="3.6"/></svg>
<div style="position:absolute;left:247px;top:861.4px;font-family:'Liberation Sans', sans-serif;font-size:24px;line-height:30px;color:#f0902a;white-space:pre;">true</div>
<div style="position:absolute;left:116px;top:914.2px;font-family:'Liberation Sans', sans-serif;font-size:24px;line-height:30px;color:#1a1a1a;white-space:pre;">null</div>
<div style="position:absolute;left:167px;top:914.2px;font-family:'Liberation Sans', sans-serif;font-size:24px;line-height:30px;color:#777;white-space:pre;">:</div>
<div style="position:absolute;left:181px;top:914.2px;font-family:'Liberation Sans', sans-serif;font-size:24px;line-height:30px;color:#1a4fd0;white-space:pre;">null</div>
<div style="position:absolute;left:116px;top:966.8px;font-family:'Liberation Sans', sans-serif;font-size:24px;line-height:30px;color:#1a1a1a;white-space:pre;">number</div>
<div style="position:absolute;left:206px;top:966.8px;font-family:'Liberation Sans', sans-serif;font-size:24px;line-height:30px;color:#777;white-space:pre;">:</div>
<div style="position:absolute;left:214px;top:959px;width:294.6px;height:46.5px;background:#dbeafa;border-radius:5px"></div>
<div style="position:absolute;left:219px;top:966.8px;font-family:'Liberation Sans', sans-serif;font-size:24px;line-height:30px;color:#1f6b1c;white-space:pre;">OnlyValuesCanBeUpdated</div>
<div style="position:absolute;left:504px;top:967px;width:1.5px;height:30px;background:#222"></div>
<svg style="position:absolute;left:82.7px;top:1023px" width="14" height="16" viewBox="0 0 14 16"><polygon points="0,0 13.5,7.3 0,14.6" fill="#666"/></svg>
<div style="position:absolute;left:116px;top:1019.4000000000001px;font-family:'Liberation Sans', sans-serif;font-size:24px;line-height:30px;color:#1a1a1a;white-space:pre;">object</div>
<div style="position:absolute;left:197px;top:1019.4000000000001px;font-family:'Liberation Sans', sans-serif;font-size:24px;line-height:30px;color:#1a1a1a;white-space:pre;">{2}</div>
<div style="position:absolute;left:116px;top:1072px;font-family:'Liberation Sans', sans-serif;font-size:24px;line-height:30px;color:#1a1a1a;white-space:pre;">newKey</div>
<div style="position:absolute;left:206px;top:1072px;font-family:'Liberation Sans', sans-serif;font-size:24px;line-height:30px;color:#777;white-space:pre;">:</div>
<div style="position:absolute;left:220px;top:1072px;font-family:'Liberation Sans', sans-serif;font-size:24px;line-height:30px;color:#1f6b1c;white-space:pre;">newVal</div>
<div style="position:absolute;left:116px;top:1124.6px;font-family:'Liberation Sans', sans-serif;font-size:24px;line-height:30px;color:#1a1a1a;white-space:pre;">string</div>
<div style="position:absolute;left:185px;top:1124.6px;font-family:'Liberation Sans', sans-serif;font-size:24px;line-height:30px;color:#777;white-space:pre;">:</div>
<div style="position:absolute;left:198px;top:1124.6px;font-family:'Liberation Sans', sans-serif;font-size:24px;line-height:30px;color:#1f6b1c;white-space:pre;">Hello World</div>
<svg style="position:absolute;left:972px;top:1154px" width="16" height="16" viewBox="0 0 16 16"><g stroke="#4a4a4a" stroke-width="1.6"><line x1="2.4" y1="14.4" x2="15.1" y2="2.5"/><line x1="9.7" y1="14.9" x2="15.1" y2="9.5"/></g></svg>
<div style="position:absolute;left:748px;top:1178.5px;width:131px;height:48px;box-sizing:border-box;background:#fff;border:2px solid #bcc5d1;border-radius:7px"></div>
<svg style="position:absolute;left:748px;top:1178.5px" width="60" height="48" viewBox="0 0 60 48"><g stroke="#212121" stroke-width="4.6" stroke-linecap="round"><line x1="24.5" y1="15.9" x2="36.5" y2="27.6"/><line x1="36.5" y1="15.9" x2="24.5" y2="27.6"/></g></svg>
<div style="position:absolute;left:792px;top:1187.5px;font-family:'Liberation Sans', sans-serif;font-size:21px;line-height:30px;color:#212121;white-space:pre;">Cancel</div>
<div style="position:absolute;left:888px;top:1178.5px;width:103px;height:48px;background:#3f658f;border-radius:7px"></div>
<svg style="position:absolute;left:888px;top:1178.5px" width="60" height="48" viewBox="0 0 60 48"><polyline points="25,22.5 31.3,28.6 45.3,14.6" fill="none" stroke="#fff" stroke-width="4.6" stroke-linecap="round" stroke-linejoin="miter"/></svg>
<div style="position:absolute;left:940px;top:1187.5px;font-family:'Liberation Sans', sans-serif;font-size:21px;line-height:30px;color:#ffffff;white-space:pre;">OK</div>
<div style="position:absolute;left:1014px;top:625px;width:996px;height:613px;background:#f2f3f6"></div>
<div style="position:absolute;left:2006.5px;top:627px;width:3.5px;height:611px;background:linear-gradient(to right,#e7e9ed,#f3f4f6)"></div>
<div style="position:absolute;left:1016px;top:627px;width:990.5px;height:608.5px;box-sizing:border-box;background:#fff;border:2px solid #dcdee3"></div>
<div style="position:absolute;left:1017px;top:1236px;width:140px;height:2px;background:#c9dcec"></div>
<div style="position:absolute;left:1014px;top:946px;width:2px;height:5px;background:#3d6590"></div>
<div style="position:absolute;left:1014px;top:1198px;width:2px;height:3px;background:#3d6590"></div>
<div style="position:absolute;left:1025px;top:635px;width:973px;height:538px;box-sizing:border-box;background:#f3f4f8;border:3px solid #dadce2"></div>
<div style="position:absolute;left:1028px;top:638px;width:967px;height:62px;background:#ebedf1;border-bottom:1px solid #dcdee3;box-sizing:border-box"></div>
<div style="position:absolute;left:1036px;top:646.5px;width:45px;height:45px;box-sizing:border-box;background:#ffffff;border:2px solid #bcc4d0;border-radius:7px"></div>
<svg style="position:absolute;left:1036px;top:646.5px" width="45" height="45" viewBox="0 0 45 45"><g transform="translate(0,0)"><g fill="#212121"><rect x="11" y="10.3" width="22.8" height="2.9" rx="1.4"/><rect x="21.1" y="16.8" width="12.7" height="2.8" rx="1.4"/><rect x="21.1" y="23.3" width="12.7" height="2.8" rx="1.4"/><rect x="11" y="29.7" width="22.8" height="2.8" rx="1.4"/><polygon points="11,16.1 17.3,21.4 11,26.7"/></g></g></svg>
<div style="position:absolute;left:1089px;top:646.5px;width:45px;height:45px;box-sizing:border-box;background:#ffffff;border:2px solid #bcc4d0;border-radius:7px"></div>
<svg style="position:absolute;left:1089px;top:646.5px" width="45" height="45" viewBox="0 0 45 45"><g transform="translate(0,0)"><g fill="none" stroke="#212121" stroke-width="3" stroke-linecap="round" stroke-linejoin="round"><polyline points="12.8,16.6 17.6,16.6 17.6,11.8"/><polyline points="32.6,16.6 27.6,16.6 27.6,11.8"/><polyline points="12.8,26.7 17.6,26.7 17.6,31"/><polyline points="32.6,26.7 27.6,26.7 27.6,31"/></g></g></svg>
<div style="position:absolute;left:1141.4px;top:646.5px;width:45px;height:45px;box-sizing:border-box;background:#ffffff;border:2px solid #bcc4d0;border-radius:7px"></div>
<svg style="position:absolute;left:1141.4px;top:646.5px" width="45" height="45" viewBox="0 0 45 45"><g transform="translate(0,0)"><g fill="#212121"><rect x="12.8" y="10.3" width="3.2" height="17.5" rx="1"/><polygon points="9.7,26.6 19.2,26.6 14.4,32.6"/><rect x="20.7" y="10.3" width="14.7" height="2.9" rx="1.4"/><rect x="20.7" y="16.8" width="11.2" height="2.8" rx="1.4"/><rect x="20.7" y="23.3" width="8.4" height="2.8" rx="1.4"/><rect x="20.7" y="29.7" width="4.8" height="2.8" rx="1.4"/></g></g></svg>
<div style="position:absolute;left:1194px;top:646.5px;width:45px;height:45px;box-sizing:border-box;background:#ffffff;border:2px solid #bcc4d0;border-radius:7px"></div>
<svg style="position:absolute;left:1194px;top:646.5px" width="45" height="45" viewBox="0 0 45 45"><g transform="translate(0,0)"><path fill="#212121" d="M10.6,8.3 L34.7,8.3 Q36.3,8.5 35.4,10 L26.2,19.4 L26.2,33.6 Q26.2,34.8 25.2,34.2 L19.3,30.9 L19.3,19.4 L9.9,10 Q9.1,8.5 10.6,8.3 Z"/></g></svg>
<div style="position:absolute;left:1247px;top:646.5px;width:45px;height:45px;box-sizing:border-box;background:#ffffff;border:2px solid #bcc4d0;border-radius:7px"></div>
<svg style="position:absolute;left:1247px;top:646.5px" width="45" height="45" viewBox="0 0 45 45"><g transform="translate(0,0)"><g transform="translate(9.7,8.3) scale(0.0513)"><path fill="#212121" d="M507.73 109.1c-2.24-9.03-13.54-12.09-20.12-5.51l-74.36 74.36-67.88-11.31-11.31-67.88 74.36-74.36c6.62-6.62 3.43-17.9-5.66-20.16-47.38-11.74-99.55.91-136.58 37.93-39.64 39.64-50.55 97.1-34.05 147.2L18.74 402.76c-24.99 24.99-24.99 65.51 0 90.5 24.99 24.99 65.51 24.99 90.5 0l213.21-213.21c50.12 16.71 107.47 5.68 147.37-34.22 37.07-37.07 49.7-89.32 37.91-136.73zM64 472c-13.25 0-24-10.75-24-24 0-13.26 10.75-24 24-24s24 10.74 24 24c0 13.25-10.75 24-24 24z"/></g></g></svg>
<div style="position:absolute;left:1314px;top:646.5px;width:45px;height:45px;box-sizing:border-box;background:#f7f8fa;border:2px solid #ccd2da;border-radius:7px"></div>
<svg style="position:absolute;left:1314px;top:646.5px" width="45" height="45" viewBox="0 0 45 45"><g transform="translate(0,0)"><g><path d="M13.3,15 A11,11 0 1 1 15.1,29.6" fill="none" stroke="#6d6d6d" stroke-width="3.1"/><polygon fill="#6d6d6d" points="9.4,8.4 12.6,8.4 12.6,12.8 16.4,16.4 20.6,16.4 20.6,19.2 9.4,19.2"/></g></g></svg>
<div style="position:absolute;left:1367px;top:646.5px;width:45px;height:45px;box-sizing:border-box;background:#f7f8fa;border:2px solid #ccd2da;border-radius:7px"></div>
<svg style="position:absolute;left:1367px;top:646.5px" width="45" height="45" viewBox="0 0 45 45"><g transform="translate(0,0)"><g transform="translate(45,0) scale(-1,1)"><g><path d="M13.3,15 A11,11 0 1 1 15.1,29.6" fill="none" stroke="#6d6d6d" stroke-width="3.1"/><polygon fill="#6d6d6d" points="9.4,8.4 12.6,8.4 12.6,12.8 16.4,16.4 20.6,16.4 20.6,19.2 9.4,19.2"/></g></g></g></svg>
<div style="position:absolute;left:1433.4px;top:646px;width:127.5px;height:45px;box-sizing:border-box;background:#f2f3f6;border:2px solid #bcc4d0;border-radius:7px"></div>
<div style="position:absolute;left:1445px;top:654px;font-family:'Liberation Sans', sans-serif;font-size:24px;line-height:30px;color:#212121;white-space:pre;">Preview</div>
<svg style="position:absolute;left:1539px;top:667px" width="8" height="8" viewBox="0 0 8 8"><polygon points="0,0 8,0 4,7" fill="#212121"/></svg>
<div style="position:absolute;left:1030px;top:706px;font-family:'Liberation Mono', monospace;font-size:23.7px;line-height:24.53px;color:#1a1a1a;white-space:pre">{
  "array": [
    1,
    2,
    3
  ],
  "boolean": true,
  "null": null,
  "number": "OnlyValuesCanBeUpdated",
  "object": {
    "a": "b",
    "c": "d"
  },
  "newKey": "newVal",
  "string": "Hello World"
}</div>
<div style="position:absolute;left:1028px;top:1124px;width:967px;height:45px;background:#ebedf1;border-top:1px solid #dcdee3;box-sizing:border-box"></div>
<div style="position:absolute;left:1034px;top:1134px;font-family:'Liberation Sans', sans-serif;font-size:23px;line-height:30px;color:#3f6a97;white-space:pre;">Size: 208 B</div>
<svg style="position:absolute;left:1978.5px;top:1153.5px" width="16" height="16" viewBox="0 0 16 16"><g stroke="#4a4a4a" stroke-width="1.6"><line x1="2.4" y1="14.4" x2="15.1" y2="2.5"/><line x1="9.7" y1="14.9" x2="15.1" y2="9.5"/></g></svg>
<div style="position:absolute;left:1753.4px;top:1178.5px;width:131px;height:48px;box-sizing:border-box;background:#fff;border:2px solid #bcc5d1;border-radius:7px"></div>
<svg style="position:absolute;left:1753.4px;top:1178.5px" width="60" height="48" viewBox="0 0 60 48"><g stroke="#212121" stroke-width="4.6" stroke-linecap="round"><line x1="24.5" y1="15.9" x2="36.5" y2="27.6"/><line x1="36.5" y1="15.9" x2="24.5" y2="27.6"/></g></svg>
<div style="position:absolute;left:1797.4px;top:1187.5px;font-family:'Liberation Sans', sans-serif;font-size:21px;line-height:30px;color:#212121;white-space:pre;">Cancel</div>
<div style="position:absolute;left:1894px;top:1178.5px;width:103px;height:48px;background:#3f658f;border-radius:7px"></div>
<svg style="position:absolute;left:1894px;top:1178.5px" width="60" height="48" viewBox="0 0 60 48"><polyline points="25,22.5 31.3,28.6 45.3,14.6" fill="none" stroke="#fff" stroke-width="4.6" stroke-linecap="round" stroke-linejoin="miter"/></svg>
<div style="position:absolute;left:1946px;top:1187.5px;font-family:'Liberation Sans', sans-serif;font-size:21px;line-height:30px;color:#ffffff;white-space:pre;">OK</div>
</body></html>
